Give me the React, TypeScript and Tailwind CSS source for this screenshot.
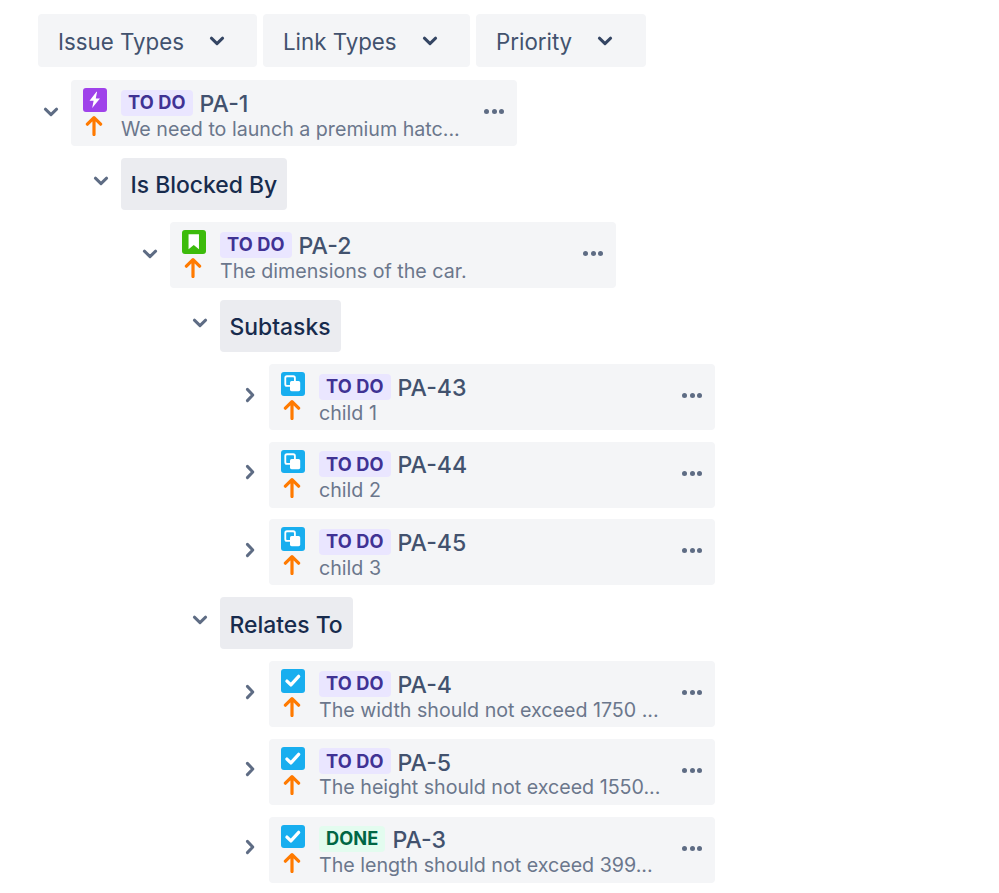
import React from 'react';

type IssueKind = 'epic' | 'story' | 'subtask' | 'task';

type Issue = {
  kind: IssueKind;
  status: 'TO DO' | 'DONE';
  issueKey: string;
  summary: string;
  open?: boolean;
  groups?: Group[];
};

type Group = {
  name: string;
  issues: Issue[];
};

const tree: Issue = {
  kind: 'epic',
  status: 'TO DO',
  issueKey: 'PA-1',
  summary: 'We need to launch a premium hatc...',
  open: true,
  groups: [
    {
      name: 'Is Blocked By',
      issues: [
        {
          kind: 'story',
          status: 'TO DO',
          issueKey: 'PA-2',
          summary: 'The dimensions of the car.',
          open: true,
          groups: [
            {
              name: 'Subtasks',
              issues: [
                { kind: 'subtask', status: 'TO DO', issueKey: 'PA-43', summary: 'child 1' },
                { kind: 'subtask', status: 'TO DO', issueKey: 'PA-44', summary: 'child 2' },
                { kind: 'subtask', status: 'TO DO', issueKey: 'PA-45', summary: 'child 3' },
              ],
            },
            {
              name: 'Relates To',
              issues: [
                { kind: 'task', status: 'TO DO', issueKey: 'PA-4', summary: 'The width should not exceed 1750 ...' },
                { kind: 'task', status: 'TO DO', issueKey: 'PA-5', summary: 'The height should not exceed 1550...' },
                { kind: 'task', status: 'DONE', issueKey: 'PA-3', summary: 'The length should not exceed 399...' },
              ],
            },
          ],
        },
      ],
    },
  ],
};

const Chevron: React.FC<{ open?: boolean; className?: string }> = ({ open, className }) => (
  <svg width="16" height="16" viewBox="0 0 16 16" fill="none" className={className}>
    {open ? (
      <path d="M2.4 5.2 8 10.6l5.6-5.4" stroke="currentColor" strokeWidth="3" strokeLinecap="round" strokeLinejoin="round" />
    ) : (
      <path d="M5.4 2.4 10.8 8l-5.4 5.6" stroke="currentColor" strokeWidth="3" strokeLinecap="round" strokeLinejoin="round" />
    )}
  </svg>
);

const TypeIcon: React.FC<{ kind: IssueKind }> = ({ kind }) => {
  const bg = {
    epic: 'bg-[#9f42ea]',
    story: 'bg-[#3cbb0b]',
    subtask: 'bg-[#18aeef]',
    task: 'bg-[#18aeef]',
  }[kind];

  return (
    <div className={`w-[23.5px] h-[23.5px] rounded-[3px] flex items-center justify-center ${bg}`}>
      <svg width="23.5" height="23.5" viewBox="0 0 23 23">
        {kind === 'epic' && <path d="M13.2 3.6 6.4 12.6h4l-1.4 7 7.6-9.4h-4.1l1.3-6.6z" fill="#fff" />}
        {kind === 'story' && <path d="M6.4 4.2h10.2v14.6l-5.1-4.2-5.1 4.2z" fill="#fff" />}
        {kind === 'subtask' && (
          <>
            <rect x="4.2" y="4.2" width="9.4" height="9.4" rx="1.6" fill="none" stroke="#fff" strokeWidth="1.8" />
            <rect x="8.8" y="8.8" width="10" height="10" rx="1.6" fill="#fff" />
          </>
        )}
        {kind === 'task' && (
          <path d="m5.8 11.8 3.9 3.8 7.6-8.4" fill="none" stroke="#fff" strokeWidth="3.2" strokeLinecap="round" strokeLinejoin="round" />
        )}
      </svg>
    </div>
  );
};

const ArrowUp = () => (
  <svg width="18" height="21" viewBox="0 0 18 21" fill="none" className="text-[#ff7a00]">
    <path d="M9 19.6V3M2.4 9.2 9 2.6l6.6 6.6" stroke="currentColor" strokeWidth="3.2" strokeLinecap="round" strokeLinejoin="round" />
  </svg>
);

const Dots = () => (
  <div className="flex gap-[2.5px]">
    <span className="w-[5px] h-[5px] rounded-full bg-[#5e6c84]" />
    <span className="w-[5px] h-[5px] rounded-full bg-[#5e6c84]" />
    <span className="w-[5px] h-[5px] rounded-full bg-[#5e6c84]" />
  </div>
);

const Lozenge: React.FC<{ status: Issue['status'] }> = ({ status }) => (
  <span
    className={`h-[26px] px-[7px] rounded-[4px] flex items-center text-[18.2px] font-bold tracking-[0.1px] ${
      status === 'DONE' ? 'bg-[#e3fcef] text-[#006644]' : 'bg-[#eae6ff] text-[#403294]'
    }`}
  >
    {status}
  </span>
);

const IssueCard: React.FC<{ issue: Issue }> = ({ issue }) => (
  <div className="flex items-center">
    <div className={`w-[33px] text-[#5e6c84] ${issue.open ? 'pl-[5px] pb-[2px]' : 'pl-[6px] pb-[5px]'}`}>
      <Chevron open={issue.open} />
    </div>
    <div className="relative w-[446px] h-[66px] bg-[#f4f5f7] rounded-[4px] flex pl-[12px] pt-[8px]">
      <div className="w-[38px] flex flex-col items-start">
        <TypeIcon kind={issue.kind} />
        <div className="pl-[2px] mt-[3.5px]">
          <ArrowUp />
        </div>
      </div>
      <div className="min-w-0">
        <div className="flex items-center gap-[7px] h-[28px] mt-[0.5px]">
          <Lozenge status={issue.status} />
          <span className="pt-[3px] text-[23.1px] font-medium text-[#42526e]">{issue.issueKey}</span>
        </div>
        <div className="text-[19.65px] leading-[24px] text-[#6b778c] whitespace-nowrap">{issue.summary}</div>
      </div>
      <div className="absolute right-[13px] top-[29px]">
        <Dots />
      </div>
    </div>
  </div>
);

const IssueNode: React.FC<{ issue: Issue }> = ({ issue }) => (
  <div className="flex flex-col gap-3">
    <IssueCard issue={issue} />
    {issue.groups?.map((group) => (
      <div key={group.name} className="ml-[49.5px] flex flex-col gap-3">
        <div className="flex items-center">
          <div className="w-[33px] pl-[5px] pb-[6px] text-[#5e6c84]">
            <Chevron open />
          </div>
          <div className="h-[52px] px-[10px] pt-[3px] bg-[#ebecf0] rounded-[4px] flex items-center text-[22.9px] font-medium text-[#172b4d]">
            {group.name}
          </div>
        </div>
        <div className="ml-[49.5px] flex flex-col gap-[11.67px]">
          {group.issues.map((child) => (
            <IssueNode key={child.issueKey} issue={child} />
          ))}
        </div>
      </div>
    ))}
  </div>
);

const filters = [
  { label: 'Issue Types', width: 'w-[219px]' },
  { label: 'Link Types', width: 'w-[207px]' },
  { label: 'Priority', width: 'w-[170px]' },
];

export default function App() {
  return (
    <div className="min-h-screen bg-white pt-[14px] pl-[38px] font-['Inter',sans-serif]">
      <div className="flex gap-[6px] mb-[13px]">
        {filters.map((filter) => (
          <div
            key={filter.label}
            className={`h-[53px] ${filter.width} pl-[20px] pt-[2px] bg-[#f4f5f7] rounded-[4px] flex items-center text-[22.3px] text-[#42526e]`}
          >
            <span>{filter.label}</span>
            <Chevron open className="ml-[25px] -mt-[2px] text-[#344563]" />
          </div>
        ))}
      </div>
      <IssueNode issue={tree} />
    </div>
  );
}
